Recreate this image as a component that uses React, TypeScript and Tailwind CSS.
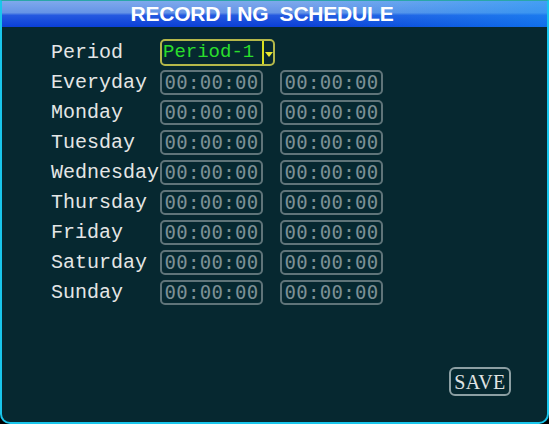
const days = ["Everyday", "Monday", "Tuesday", "Wednesday", "Thursday", "Friday", "Saturday", "Sunday"]

function TimeBox() {
  return (
    <div className="flex h-[25px] w-[103px] items-center justify-center rounded-[5px] border-2 border-[#5f7479] text-[19px] leading-none tracking-[0.3px] text-[#7d9095] [font-family:'DejaVu_Sans_Mono',monospace]">
      00:00:00
    </div>
  )
}

export default function App() {
  return (
    <div className="h-[424px] w-[549px] bg-black">
      <div className="flex h-full flex-col overflow-hidden rounded-b-[10px] border-x-2 border-b-2 border-t border-[#19c6ec] border-t-[#2aa6a8] bg-[#062830]">
        {/* title bar */}
        <div className="relative flex h-[26px] items-center justify-center pr-[25px] bg-[linear-gradient(180deg,#7ea9ec_0%,#6594e6_45%,#2459e0_55%,#0b3fd6_100%)]">
          <div className="absolute inset-0 bg-[linear-gradient(90deg,rgba(0,0,0,0)_0%,rgba(0,0,0,0)_55%,rgba(20,150,250,0.55)_100%)]" />
          <span className="relative text-[21px] font-bold tracking-[-0.2px] text-white [font-family:'Liberation_Sans',Arial,sans-serif]">
            RECORD I NG&nbsp;&nbsp;SCHEDULE
          </span>
        </div>

        <div className="flex flex-1 flex-col pl-[49px] pt-[10px]">
          <div className="flex h-[30px] items-center">
            <span className="w-[109px] pt-[2px] text-[20px] text-[#e4e6e6] [font-family:'Liberation_Mono',monospace]">Period</span>
            <div className="flex h-[27px] w-[115px] items-center rounded-[5px] border-2 border-[#b4b84a]">
              <span className="w-[100px] pl-[1px] text-[19px] leading-none text-[#2ade2c] [font-family:'Liberation_Mono',monospace]">
                Period-1
              </span>
              <div className="flex h-full flex-1 items-center justify-center border-l-2 border-[#d8e020]">
                <div className="mt-[5px] h-0 w-0 border-x-[4px] border-t-[5px] border-x-transparent border-t-[#e8e830]" />
              </div>
            </div>
          </div>
          {days.map((d) => (
            <div key={d} className="flex h-[30px] items-center">
              <span className="w-[109px] pt-[2px] text-[20px] text-[#e4e6e6] [font-family:'Liberation_Mono',monospace]">{d}</span>
              <TimeBox />
              <div className="w-[17px]" />
              <TimeBox />
            </div>
          ))}

          <div className="mt-auto flex justify-end pb-[26px] pr-[36px]">
            <div className="flex h-[29px] w-[62px] items-center justify-center rounded-[6px] border-2 border-[#8c9fa3] text-[20px] tracking-[0.5px] text-[#e0e4e4] [font-family:'Liberation_Serif',serif]">
              SAVE
            </div>
          </div>
        </div>
      </div>
    </div>
  )
}
